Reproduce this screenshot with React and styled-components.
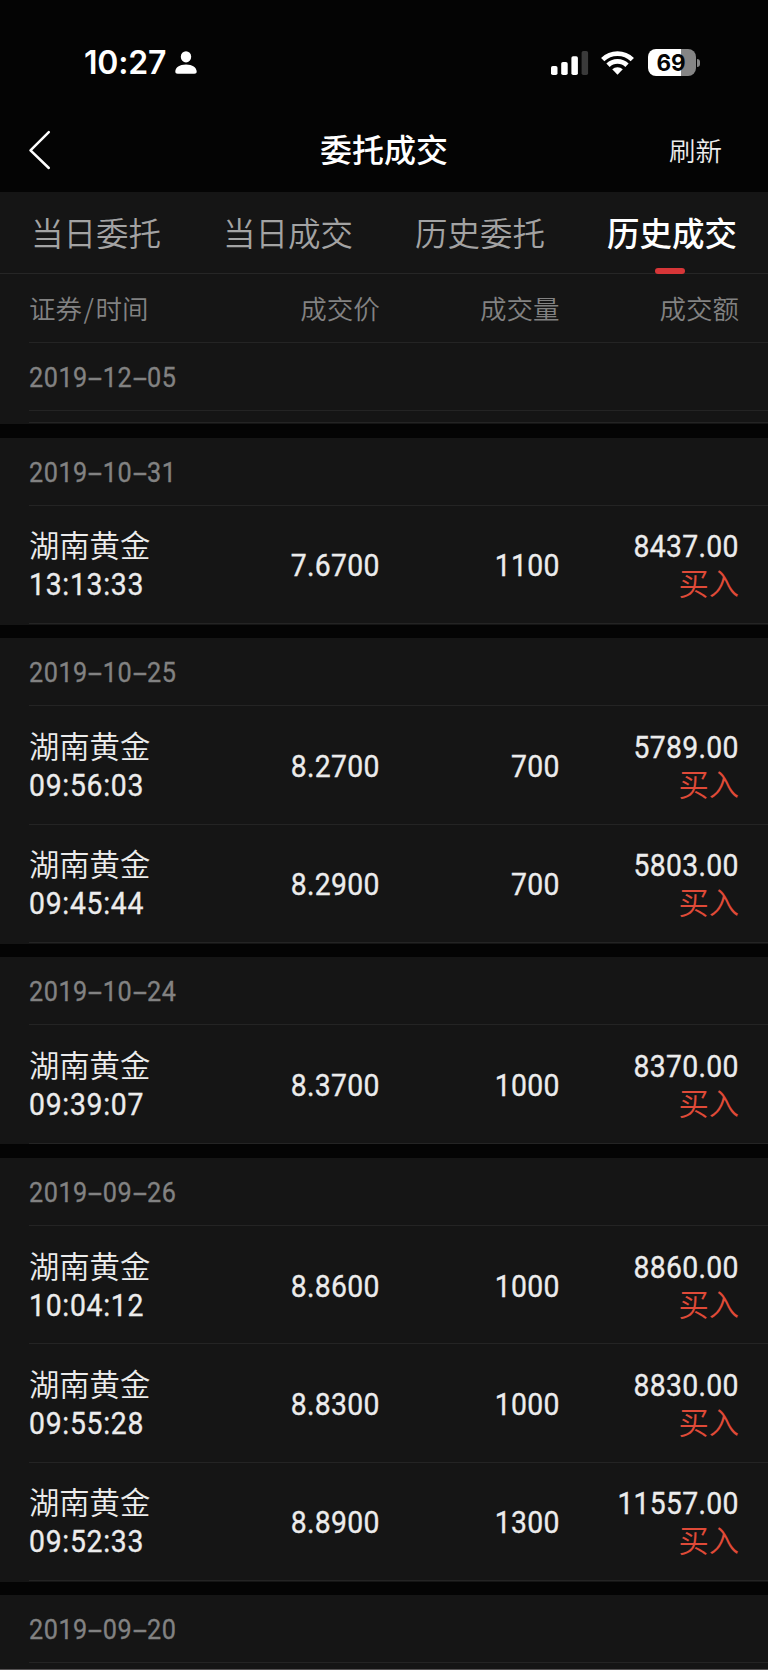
import React from 'react';
import styled, { createGlobalStyle } from 'styled-components';

const GlobalStyle = createGlobalStyle`
    body {
        margin: 0;
        background: #040404;
    }

    * {
        box-sizing: border-box;
    }
`;

const Screen = styled.div`
    display: flex;
    flex-direction: column;
    width: 768px;
    height: 1670px;
    overflow: hidden;
    background: #040404;
    color: #ececec;
    font-family: Roboto, 'Noto Sans CJK SC', sans-serif;
    border-bottom: 1px solid #555253;
`;

const StatusBar = styled.div`
    flex: none;
    display: flex;
    align-items: center;
    justify-content: space-between;
    height: 108px;
    padding: 17px 68px 0 84px;
`;

const StatusGroup = styled.div`
    display: flex;
    align-items: center;
`;

const Clock = styled.span`
    margin-right: 9px;
    color: #fff;
    font-family: Inter, sans-serif;
    font-size: 32px;
    font-weight: 600;
    line-height: 38px;
    letter-spacing: -0.2px;
`;

const Battery = styled.div`
    display: flex;
    align-items: center;
    justify-content: center;
    width: 48px;
    height: 27px;
    margin-left: 14px;
    padding-right: 2px;
    border-radius: 8px;
    background: linear-gradient(to right, #fff 69%, #858585 69%);
    color: #050505;
    font-family: Inter, sans-serif;
    font-size: 22.5px;
    font-weight: 700;
    line-height: 27px;
`;

const BatteryTip = styled.div`
    width: 3px;
    height: 8px;
    margin-left: 1px;
    border-radius: 0 4px 4px 0;
    background: #858585;
`;

const NavBar = styled.div`
    flex: none;
    display: grid;
    grid-template-columns: 1fr auto 1fr;
    align-items: center;
    height: 84px;
    padding: 0 46px 0 28px;
`;

const BackIcon = styled.svg`
    display: block;
`;

const Title = styled.div`
    margin-right: -18px;
    padding-top: 2px;
    color: #fff;
    font-size: 32px;
    font-weight: 500;
    line-height: 40px;
`;

const Refresh = styled.div`
    padding-top: 3px;
    text-align: right;
    font-size: 26.5px;
    font-weight: 350;
    line-height: 40px;
`;

const Tabs = styled.div`
    flex: none;
    display: flex;
    height: 82px;
    background: #151515;
    border-bottom: 1px solid #262626;
`;

const Tab = styled.div`
    position: relative;
    flex: 1;
    padding-top: 3px;
    text-align: center;
    font-size: 32.5px;
    line-height: 80px;
    font-weight: ${({ $active }) => ($active ? 500 : 350)};
    color: ${({ $active }) => ($active ? '#fff' : '#a3a3a3')};

    /* red marker over the divider */
    &:after {
        content: '';
        display: ${({ $active }) => ($active ? 'block' : 'none')};
        position: absolute;
        bottom: -1px;
        left: 79px;
        width: 30px;
        height: 6px;
        border-radius: 3px;
        background: #d73638;
    }
`;

const Columns = styled.div`
    flex: none;
    display: grid;
    grid-template-columns: 1fr 179.6px 179.6px 179.6px;
    align-items: center;
    padding-right: 29px;
    text-align: right;
`;

const Panel = styled.div`
    flex: none;
    padding-left: 29px;
    background: #151515;
`;

const ListHead = styled(Columns)`
    height: 68.8px;
    border-bottom: 1px solid #242424;
    color: #828282;
    font-family: 'Noto Sans CJK SC', sans-serif;
    font-size: 26.5px;
    font-weight: 350;
`;

const Left = styled.div`
    text-align: left;
`;

const Slash = styled.span`
    padding: 0 1.5px;
`;

const Group = styled(Panel)`
    padding-bottom: 0.8px;
    margin-bottom: 13.6px;
`;

const DateRow = styled.div`
    height: 67.9px;
    padding-top: 1px;
    border-bottom: 1px solid #242424;
    color: #828282;
    font-size: 28px;
    line-height: 67px;
`;

const Dash = styled.span`
    display: inline-block;
    width: 16.5px;
    text-align: center;
    letter-spacing: 0;
    transform: scaleX(2);
`;

const EmptyRow = styled.div`
    height: 12.7px;
    border-bottom: 1px solid #242424;
`;

const Row = styled(Columns)`
    height: 118.35px;
    padding-top: 4px;
    border-bottom: 1px solid #242424;
    font-size: 31.5px;
    line-height: 38px;
`;

const Name = styled.div`
    font-size: 30.3px;
    font-weight: 350;
`;

/* condensed figures */
const Num = styled.div`
    transform: scaleX(0.9);
    transform-origin: ${({ $from }) => $from || 'right'} center;
    letter-spacing: ${({ $gap }) => $gap || 0.3}px;
    -webkit-text-stroke: 0.35px currentColor;
`;

const Side = styled.div`
    color: #df4a38;
    font-size: 30.3px;
    font-weight: 350;
`;

const tabs = ['当日委托', '当日成交', '历史委托', '历史成交'];

const groups = [
    { date: '2019-12-05', trades: [] },
    { date: '2019-10-31', trades: [['13:13:33', '7.6700', '1100', '8437.00']] },
    {
        date: '2019-10-25',
        trades: [
            ['09:56:03', '8.2700', '700', '5789.00'],
            ['09:45:44', '8.2900', '700', '5803.00'],
        ],
    },
    { date: '2019-10-24', trades: [['09:39:07', '8.3700', '1000', '8370.00']] },
    {
        date: '2019-09-26',
        trades: [
            ['10:04:12', '8.8600', '1000', '8860.00'],
            ['09:55:28', '8.8300', '1000', '8830.00'],
            ['09:52:33', '8.8900', '1300', '11557.00'],
        ],
    },
    { date: '2019-09-20', trades: [] },
];

function PersonIcon() {
    return (
        <svg width="22" height="23" viewBox="0 0 22 23" fill="#fff">
            <ellipse cx="11" cy="5.8" rx="5.2" ry="5.6" />
            <path d="M0.3 20.5C0.3 16.5 4.5 13.4 11 13.4s10.7 3.1 10.7 7.1c0 1.6-.8 2.2-2.4 2.2H2.7c-1.6 0-2.4-.6-2.4-2.2z" />
        </svg>
    );
}

function SignalIcon() {
    return (
        <svg width="38" height="24" viewBox="0 0 38 24" fill="#fff">
            <rect x="0" y="15" width="6.5" height="9" rx="1.8" />
            <rect x="10.2" y="11" width="6.5" height="13" rx="1.8" />
            <rect x="20.4" y="5.2" width="6.5" height="18.8" rx="1.8" />
            <rect x="30.6" y="0" width="6.5" height="24" rx="1.8" fill="#3a3a3a" />
        </svg>
    );
}

const Wifi = styled.svg`
    margin-left: 12px;
`;

function WifiIcon() {
    return (
        <Wifi width="33" height="24" viewBox="0 0 33 24">
            <g fill="none" stroke="#fff" strokeWidth="4.7">
                <path d="M1.7 8.6A21.2 21.2 0 0 1 31.3 8.6" />
                <path d="M7 14.2A13.6 13.6 0 0 1 26 14.2" />
            </g>
            <path d="M11.2 18.3a7.6 7.6 0 0 1 10.6 0L16.5 23.7z" fill="#fff" />
        </Wifi>
    );
}

function DateText({ value }) {
    const [y, m, d] = value.split('-');
    return (
        <DateRow>
            <Num $from="left" $gap={0.6}>
                {y}<Dash>-</Dash>{m}<Dash>-</Dash>{d}
            </Num>
        </DateRow>
    );
}

export default function App() {
    return (
        <Screen>
            <GlobalStyle />
            <StatusBar>
                <StatusGroup>
                    <Clock>10:27</Clock>
                    <PersonIcon />
                </StatusGroup>
                <StatusGroup>
                    <SignalIcon />
                    <WifiIcon />
                    <Battery>69</Battery>
                    <BatteryTip />
                </StatusGroup>
            </StatusBar>
            <NavBar>
                <BackIcon width="24" height="40" viewBox="0 0 24 40" fill="none" stroke="#fff" strokeWidth="2.5" strokeLinecap="round" strokeLinejoin="round">
                    <path d="M20.8 2.2L2.5 20.3L20.8 38" />
                </BackIcon>
                <Title>委托成交</Title>
                <Refresh>刷新</Refresh>
            </NavBar>
            <Tabs>
                {tabs.map((tab, i) => (
                    <Tab key={tab} $active={i === 3}>{tab}</Tab>
                ))}
            </Tabs>
            <Panel>
                <ListHead>
                    <Left>证券<Slash>/</Slash>时间</Left>
                    <div>成交价</div>
                    <div>成交量</div>
                    <div>成交额</div>
                </ListHead>
            </Panel>
            {groups.map(({ date, trades }) => (
                <Group key={date}>
                    <DateText value={date} />
                    {trades.length === 0 && <EmptyRow />}
                    {trades.map(([time, price, volume, amount]) => (
                        <Row key={time}>
                            <Left>
                                <Name>湖南黄金</Name>
                                <Num $from="left" $gap={0.8}>{time}</Num>
                            </Left>
                            <Num>{price}</Num>
                            <Num>{volume}</Num>
                            <div>
                                <Num>{amount}</Num>
                                <Side>买入</Side>
                            </div>
                        </Row>
                    ))}
                </Group>
            ))}
        </Screen>
    );
}
